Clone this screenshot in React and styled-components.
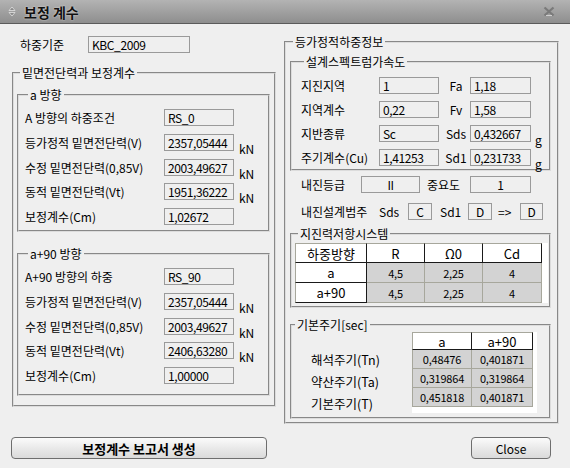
import React from 'react';
import styled, { createGlobalStyle } from 'styled-components';

const GlobalStyle = createGlobalStyle`
  html, body {
    margin: 0;
    padding: 0;
    background: #efefef;
  }
  body {
    font-family: "Noto Sans CJK KR", "Noto Sans", sans-serif;
    font-size: 12px;
    color: #000;
  }
`;

const Window = styled.div`
  width: 570px;
  height: 468px;
  display: flex;
  flex-direction: column;
  background: #efefef;
  overflow: hidden;
`;

const TitleBar = styled.div`
  height: 23px;
  flex: none;
  border-bottom: 1px solid #5b5b5b;
  background: linear-gradient(#b3b3b3, #8e8e8e);
  display: flex;
  align-items: center;
  padding: 0 15px 0 8px;
  gap: 8px;
`;

const Title = styled.span`
  flex: 1;
  font-size: 14px;
  font-weight: 700;
  color: #111;
  text-shadow: 0 0 2px rgba(255, 255, 255, 0.7);
`;

const Body = styled.div`
  flex: 1;
  display: flex;
  flex-direction: column;
  padding: 11px 11px 0 12px;
`;

const Columns = styled.div`
  display: flex;
  gap: 8px;
  align-items: flex-start;
`;

const Column = styled.div`
  width: ${(p) => p.$w}px;
  display: flex;
  flex-direction: column;
`;

const Group = styled.fieldset`
  margin: ${(p) => p.$m || '0'};
  padding: ${(p) => p.$pad || '0'};
  border: 2px groove #dcdcdc;
  min-width: 0;
  display: flex;
  flex-direction: column;
  gap: ${(p) => p.$gap || 0}px;
`;

const Legend = styled.legend`
  padding: 0 2px;
  margin-left: 3px;
  line-height: 14px;
  font-size: 12px;
`;

const Row = styled.div`
  display: flex;
  align-items: center;
  height: 17px;
  margin: ${(p) => p.$m || '0'};
`;

const Label = styled.span`
  width: ${(p) => p.$w}px;
  flex: none;
  white-space: nowrap;
  text-align: ${(p) => (p.$center ? 'center' : 'left')};
`;

const Field = styled.div`
  width: ${(p) => p.$w}px;
  height: 17px;
  flex: none;
  box-sizing: border-box;
  border: 1px solid #9a9a9a;
  background: #efefef;
  padding: 0 3px;
  line-height: 15px;
  letter-spacing: -0.4px;
  white-space: nowrap;
  overflow: hidden;
  text-align: ${(p) => (p.$center ? 'center' : 'left')};
`;

const Unit = styled.span`
  align-self: flex-end;
  line-height: 12px;
  margin: 0 0 -4px ${(p) => p.$ml || 5}px;
`;

const Table = styled.div`
  display: grid;
  grid-template-columns: ${(p) => p.$cols};
  width: ${(p) => p.$w}px;
  background: #fff;
  padding: 0 ${(p) => p.$pr || 0}px ${(p) => p.$pb || 0}px 0;
  align-self: flex-start;
`;

const Cell = styled.div`
  height: ${(p) => p.$h || 20}px;
  box-sizing: border-box;
  display: flex;
  align-items: center;
  justify-content: center;
  font-size: ${(p) => (p.$head ? 13 : 11)}px;
  letter-spacing: ${(p) => (p.$head ? 0 : -0.2)}px;
  background: ${(p) => (p.$head ? '#fff' : '#d3d3d3')};
  border-right: 1px solid ${(p) => (p.$head ? '#1a1a1a' : '#a7a79c')};
  border-bottom: 1px solid ${(p) => (p.$head ? '#1a1a1a' : '#a7a79c')};
  border-left: ${(p) => (p.$first ? '1px solid #a7a79c' : 'none')};
  border-top: ${(p) => (p.$top ? '1px solid #a7a79c' : 'none')};
`;

const PeriodBody = styled.div`
  display: flex;
`;

const PeriodLabels = styled.div`
  width: 101px;
  padding: 21px 0 0 19px;
  display: flex;
  flex-direction: column;
  gap: 9px;
  line-height: 13px;
  font-size: 12.5px;
`;

const Footer = styled.div`
  display: flex;
  justify-content: space-between;
  margin: 13px 8px 0 -1px;
`;

const Button = styled.button`
  width: ${(p) => p.$w}px;
  height: 22px;
  border: 1px solid #6e6e6e;
  border-radius: 4px;
  background: linear-gradient(#fbfbfb, #e6e6e6 60%, #dadada);
  font-family: inherit;
  font-size: ${(p) => (p.$bold ? 13 : 12)}px;
  font-weight: ${(p) => (p.$bold ? 700 : 400)};
  color: #000;
  padding: 0;
`;

const MenuIcon = () => (
  <svg width="8" height="11" viewBox="0 0 8 11">
    <path d="M4 1 L7 4.5 H1 Z" fill="#8a8a8a" stroke="#e2e2e2" strokeWidth="0.8" />
    <path d="M4 10 L7 6.5 H1 Z" fill="#8a8a8a" stroke="#e2e2e2" strokeWidth="0.8" />
  </svg>
);

const CloseIcon = () => (
  <svg width="12" height="11" viewBox="0 0 12 11">
    <path d="M1.5 1.5 L10.5 9.5 M10.5 1.5 L1.5 9.5" stroke="#7a7a7a" strokeWidth="2.2" />
    <path d="M3 9.5 H9" stroke="#cfcfcf" strokeWidth="1" />
  </svg>
);

const aRows = [
  ['A 방향의 하중조건', 'RS_0', false],
  ['등가정적 밑면전단력(V)', '2357,05444', true],
  ['수정 밑면전단력(0,85V)', '2003,49627', true],
  ['동적 밑면전단력(Vt)', '1951,36222', true],
  ['보정계수(Cm)', '1,02672', false],
];

const bRows = [
  ['A+90 방향의 하중', 'RS_90', false],
  ['등가정적 밑면전단력(V)', '2357,05444', true],
  ['수정 밑면전단력(0,85V)', '2003,49627', true],
  ['동적 밑면전단력(Vt)', '2406,63280', true],
  ['보정계수(Cm)', '1,00000', false],
];

const spectrum = [
  ['지진지역', '1', 'Fa', '1,18', ''],
  ['지역계수', '0,22', 'Fv', '1,58', ''],
  ['지반종류', 'Sc', 'Sds', '0,432667', 'g'],
  ['주기계수(Cu)', '1,41253', 'Sd1', '0,231733', 'g'],
];

const system = [
  ['하중방향', 'R', 'Ω0', 'Cd'],
  ['a', '4,5', '2,25', '4'],
  ['a+90', '4,5', '2,25', '4'],
];

const periods = [
  ['a', 'a+90'],
  ['0,48476', '0,401871'],
  ['0,319864', '0,319864'],
  ['0,451818', '0,401871'],
];

function ShearGroup({ title, rows, m, pb }) {
  return (
    <Group $m={m} $pad={`7px 0 ${pb}px 6px`} $gap={7.75}>
      <Legend>{title}</Legend>
      {rows.map(([label, value, unit]) => (
        <Row key={label}>
          <Label $w={139}>{label}</Label>
          <Field $w={70}>{value}</Field>
          {unit && <Unit>kN</Unit>}
        </Row>
      ))}
    </Group>
  );
}

export default function App() {
  return (
    <Window>
      <GlobalStyle />
      <TitleBar>
        <MenuIcon />
        <Title>보정 계수</Title>
        <CloseIcon />
      </TitleBar>
      <Body>
        <Columns>
          <Column $w={264}>
            <Row $m="1px 0 0 8px">
              <Label $w={68}>하중기준</Label>
              <Field $w={102}>KBC_2009</Field>
            </Row>
            <Group $m="13px 0 0 0" $pad="8px 4px 9px 3px">
              <Legend>밑면전단력과 보정계수</Legend>
              <ShearGroup title="a 방향" rows={aRows} pb={5} />
              <ShearGroup title="a+90 방향" rows={bRows} m="15px 0 0 0" pb={10} />
            </Group>
          </Column>

          <Column $w={275}>
            <Group $pad="6px 6px 3px 4px">
              <Legend>등가정적하중정보</Legend>
              <Group $pad="8px 0 3px 9px" $gap={7}>
                <Legend>설계스펙트럼가속도</Legend>
                {spectrum.map(([l1, v1, l2, v2, u]) => (
                  <Row key={l1}>
                    <Label $w={78}>{l1}</Label>
                    <Field $w={60}>{v1}</Field>
                    <Label $w={28} $center style={{ marginLeft: 3 }}>
                      {l2}
                    </Label>
                    <Field $w={61}>{v2}</Field>
                    {u && <Unit $ml={4}>{u}</Unit>}
                  </Row>
                ))}
              </Group>

              <Row $m="5px 0 0 11px">
                <Label $w={60}>내진등급</Label>
                <Field $w={59} $center>II</Field>
                <Label $w={43} style={{ marginLeft: 7 }}>중요도</Label>
                <Field $w={61} $center>1</Field>
              </Row>
              <Row $m="10px 0 0 11px">
                <Label $w={78}>내진설계범주</Label>
                <Label $w={29}>Sds</Label>
                <Field $w={24} $center>C</Field>
                <Label $w={28} style={{ marginLeft: 8 }}>Sd1</Label>
                <Field $w={24} $center>D</Field>
                <Label $w={22} style={{ marginLeft: 6 }}>=&gt;</Label>
                <Field $w={23} $center>D</Field>
              </Row>

              <Group $m="7px 0 0 0" $pad="2px 0 3px 3px">
                <Legend>지진력저항시스템</Legend>
                <Table $cols="72px 58px 58px 59px" $w={250} $pr={3}>
                  {system.map((row, r) =>
                    row.map((c, i) => (
                      <Cell
                        key={`${r}-${i}`}
                        $head={r === 0 || i === 0}
                        $first={i === 0}
                        $top={r === 0}
                      >
                        {c}
                      </Cell>
                    ))
                  )}
                </Table>
              </Group>

              <Group $m="10px 0 0 0" $pad="0 0 4px 0">
                <Legend>기본주기[sec]</Legend>
                <PeriodBody>
                  <PeriodLabels>
                    <span>해석주기(Tn)</span>
                    <span>약산주기(Ta)</span>
                    <span>기본주기(T)</span>
                  </PeriodLabels>
                  <Table $cols="60px 61px" $w={123} $pr={2} $pb={6}>
                    {periods.map((row, r) =>
                      row.map((c, i) => (
                        <Cell
                          key={`${r}-${i}`}
                          $head={r === 0}
                          $first={i === 0}
                          $top={r === 0}
                          $h={r === 0 ? 18 : 19}
                        >
                          {c}
                        </Cell>
                      ))
                    )}
                  </Table>
                </PeriodBody>
              </Group>
            </Group>
          </Column>
        </Columns>

        <Footer>
          <Button $w={256} $bold>보정계수 보고서 생성</Button>
          <Button $w={80}>Close</Button>
        </Footer>
      </Body>
    </Window>
  );
}
